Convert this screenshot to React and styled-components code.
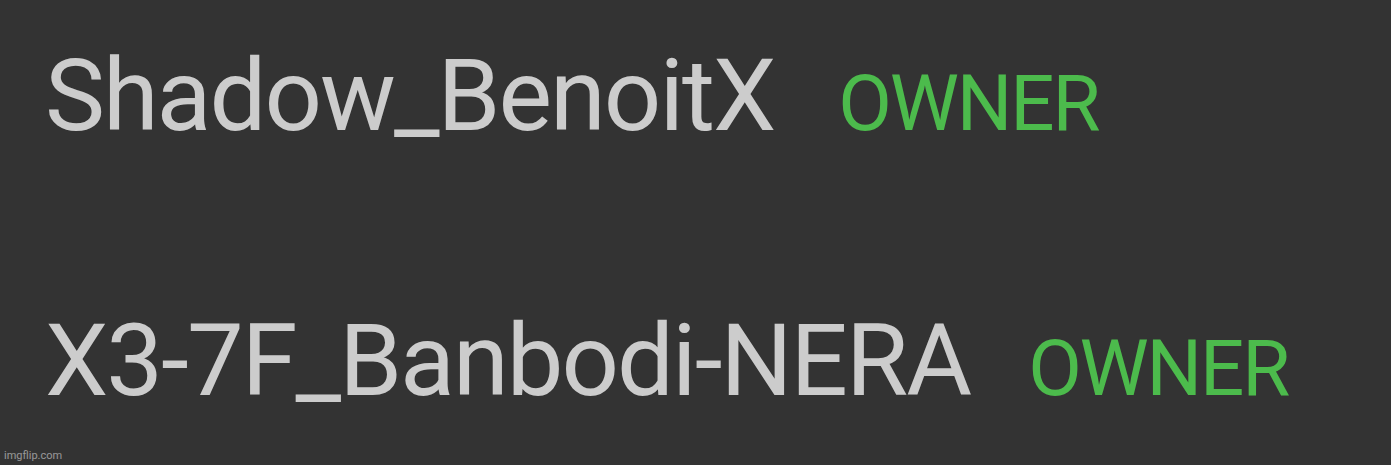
import React from "react";
import styled, { createGlobalStyle } from "styled-components";

const GlobalStyle = createGlobalStyle`
  html, body {
    margin: 0;
    padding: 0;
    background: #333333;
  }
  body {
    font-family: Roboto, "Noto Sans", sans-serif;
  }
`;

const Page = styled.div`
  position: relative;
  width: 1391px;
  height: 465px;
  background: #333333;
  overflow: hidden;
  display: flex;
  flex-direction: column;
  gap: 164px;
  padding: 45px 0 0 45px;
  box-sizing: border-box;
`;

const Row = styled.div`
  display: flex;
  align-items: baseline;
  gap: ${(p) => p.gap}px;
`;

const Name = styled.span`
  font-size: 101px;
  line-height: 1;
  color: #cccccc;
  letter-spacing: -2px;
`;

const Role = styled.span`
  font-size: 78px;
  line-height: 1;
  color: #4cbb4c;
  letter-spacing: -2.2px;
`;

const Watermark = styled.div`
  position: absolute;
  left: 4px;
  bottom: 3px;
  font-size: 11px;
  color: rgba(255, 255, 255, 0.5);
  font-family: Roboto, "Noto Sans", sans-serif;
`;

const members = [
  { name: "Shadow_BenoitX", gap: 64 },
  { name: "X3-7F_Banbodi-NERA", gap: 58 },
];

export default function App() {
  return (
    <>
      <GlobalStyle />
      <Page>
        {members.map((m) => (
          <Row key={m.name} gap={m.gap}>
            <Name>{m.name}</Name>
            <Role>OWNER</Role>
          </Row>
        ))}
        <Watermark>imgflip.com</Watermark>
      </Page>
    </>
  );
}
